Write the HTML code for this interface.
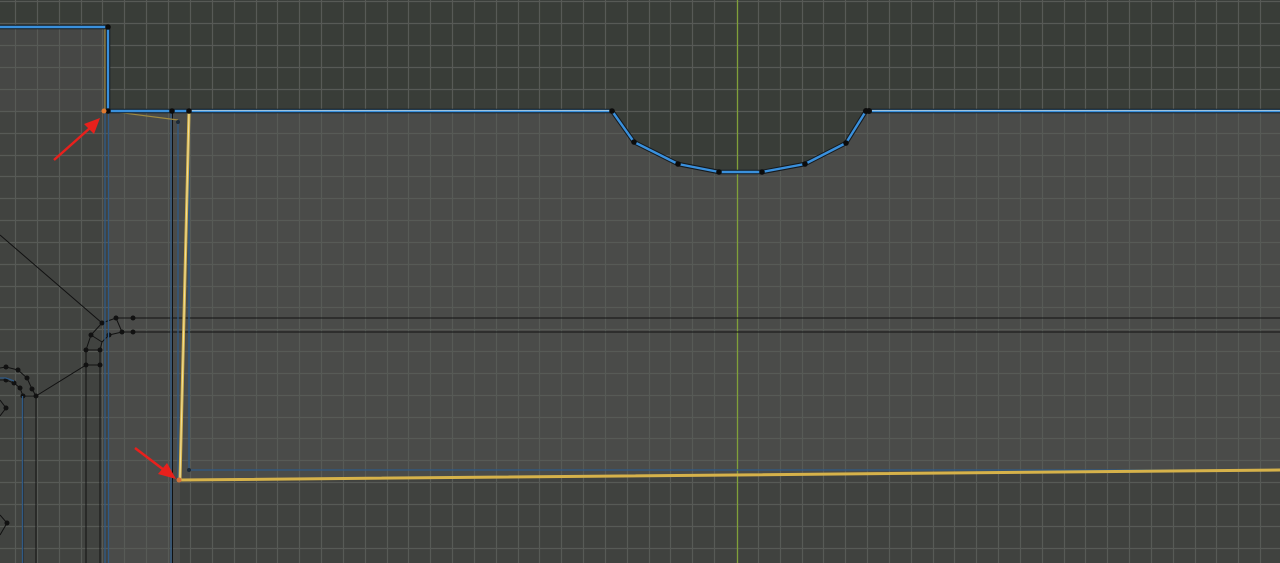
<!DOCTYPE html>
<html><head><meta charset="utf-8"><style>html,body{margin:0;padding:0;background:#3a3d39;overflow:hidden;width:1280px;height:563px}</style></head><body>
<svg width="1280" height="563" viewBox="0 0 1280 563" xmlns="http://www.w3.org/2000/svg" style="display:block">
<rect width="1280" height="563" fill="#393d38"/>
<rect x="0" y="28" width="108" height="83" fill="#464745"/>
<rect x="0" y="111" width="180" height="452" fill="#414340"/>
<path d="M108 111H612L634 142L678 164L719 172L762 172L805 164L846 143L866 111H1280V470L180 480V563H108Z" fill="#4a4b49"/>
<path d="M180 480L1280 470V563H180Z" fill="#40423f"/>
<path stroke="#575a56" stroke-width="1.2" fill="none" d="M15.5 0V563M37.5 0V563M59.5 0V563M81.5 0V563M102.5 0V563M124.5 0V563M146.5 0V563M168.5 0V563M190.5 0V563M212.5 0V563M234.5 0V563M256.5 0V563M277.5 0V563M299.5 0V563M321.5 0V563M343.5 0V563M365.5 0V563M387.5 0V563M408.5 0V563M430.5 0V563M452.5 0V563M474.5 0V563M496.5 0V563M518.5 0V563M539.5 0V563M561.5 0V563M583.5 0V563M605.5 0V563M627.5 0V563M649.5 0V563M670.5 0V563M692.5 0V563M714.5 0V563M758.5 0V563M780.5 0V563M802.5 0V563M823.5 0V563M845.5 0V563M867.5 0V563M889.5 0V563M911.5 0V563M933.5 0V563M954.5 0V563M976.5 0V563M998.5 0V563M1020.5 0V563M1042.5 0V563M1064.5 0V563M1085.5 0V563M1107.5 0V563M1129.5 0V563M1151.5 0V563M1173.5 0V563M1195.5 0V563M1216.5 0V563M1238.5 0V563M1260.5 0V563M0 1.5H1280M0 23.5H1280M0 45.5H1280M0 67.5H1280M0 89.5H1280M0 111.5H1280M0 133.5H1280M0 155.5H1280M0 176.5H1280M0 198.5H1280M0 220.5H1280M0 242.5H1280M0 264.5H1280M0 286.5H1280M0 307.5H1280M0 329.5H1280M0 351.5H1280M0 373.5H1280M0 395.5H1280M0 417.5H1280M0 438.5H1280M0 460.5H1280M0 482.5H1280M0 504.5H1280M0 526.5H1280M0 548.5H1280"/>
<line x1="737.5" y1="0" x2="737.5" y2="563" stroke="#80a03a" stroke-width="1.3"/>
<g stroke="#111" stroke-width="1" fill="none">
<path d="M133 318H1280M133 332H1280"/>
<path d="M102 323L116 318L133 318M102 323L91 335L86 350L86 365V563M109 335L122 332H133M109 335L102 342L100 350L100 365V563M86 350H100M91 335L102 342M116 318L122 332"/>
<path d="M0 235L102 323"/>
<path d="M36 396L86 365H100"/>
<path d="M0 368L6 367L18 370L27 378L32 389L36 396V563M0 380L6 380L14 383L20 388L23 396V563M23 396H36"/>
<path d="M0 400L6 408L0 416M0 515L7 523L0 535"/>
<line x1="172.5" y1="111" x2="172.5" y2="563"/>
</g>
<g fill="#111">
<circle cx="102" cy="323" r="2.5"/><circle cx="116" cy="318" r="2.5"/><circle cx="133" cy="318" r="2.5"/>
<circle cx="91" cy="335" r="2.5"/><circle cx="109" cy="335" r="2.5"/><circle cx="122" cy="332" r="2.5"/><circle cx="133" cy="332" r="2.5"/>
<circle cx="86" cy="350" r="2.5"/><circle cx="100" cy="350" r="2.5"/><circle cx="86" cy="365" r="2.5"/><circle cx="100" cy="365" r="2.5"/>
<circle cx="6" cy="367" r="2.5"/><circle cx="18" cy="370" r="2.5"/><circle cx="27" cy="378" r="2.5"/><circle cx="32" cy="389" r="2.5"/><circle cx="36" cy="396" r="2.5"/>
<circle cx="6" cy="380" r="2.5"/><circle cx="14" cy="383" r="2.5"/><circle cx="20" cy="388" r="2.5"/><circle cx="23" cy="396" r="2.5"/>
<circle cx="6" cy="408" r="2.5"/><circle cx="7" cy="523" r="2.5"/>
</g>
<g stroke="#2f5a86" stroke-width="1.3" fill="none">
<line x1="105" y1="111" x2="105" y2="563"/>
<line x1="108.5" y1="111" x2="108.5" y2="563"/>
<line x1="171" y1="111" x2="171" y2="563"/>
<line x1="178" y1="120" x2="178" y2="480"/>
<line x1="22.5" y1="396" x2="22.5" y2="563"/>
<path d="M0 378L6 378L14 381"/>
<path d="M189 120V470H1280"/>
</g>
<path d="M189 111L180 480L1280 470" stroke="#d6b24a" stroke-width="3" fill="none"/>
<path d="M189 111L180 480" stroke="#efe0a0" stroke-width="1" fill="none"/>
<path d="M105 28V111M108 111L178 120" stroke="#a08a40" stroke-width="1.2" fill="none"/>
<path d="M0 27H108V111H612L634 142L678 164L719 172L762 172L805 164L846 143L866 111H1280" stroke="#151a1e" stroke-width="4.5" fill="none" stroke-linejoin="round"/>
<path d="M0 27H108V111H612L634 142L678 164L719 172L762 172L805 164L846 143L866 111H1280" stroke="#3a90dc" stroke-width="2.4" fill="none" stroke-linejoin="round"/>
<path d="M189 110.5H612M866 110.5H1280" stroke="#9cc2de" stroke-width="1" fill="none"/>
<g fill="#0c0c0c">
<circle cx="108" cy="27" r="2.8"/><circle cx="108" cy="111" r="2.8"/><circle cx="172" cy="111" r="2.8"/><circle cx="189" cy="111" r="2.8"/>
<circle cx="612" cy="111" r="2.8"/><circle cx="634" cy="142" r="2.8"/><circle cx="678" cy="164" r="2.8"/><circle cx="719" cy="172" r="2.8"/><circle cx="762" cy="172" r="2.8"/><circle cx="805" cy="164" r="2.8"/><circle cx="846" cy="143" r="2.8"/><circle cx="866" cy="111" r="3"/><circle cx="869" cy="111" r="3"/>
<circle cx="189" cy="470" r="2" fill="#1c2a38"/><circle cx="178" cy="122" r="2" fill="#1c2a38"/>
</g>
<circle cx="104" cy="111" r="2.5" fill="#e07a30"/>
<circle cx="179" cy="480" r="2.5" fill="#d0703a"/>
<g stroke="#e8201c" stroke-width="2.5" fill="#e8201c">
<line x1="54" y1="160" x2="90" y2="128"/>
<polygon points="100,118 84,124 94,134" stroke-width="0"/>
<line x1="135" y1="448" x2="164" y2="470"/>
<polygon points="176,479 158,474 167,463" stroke-width="0"/>
</g>
</svg>
</body></html>
